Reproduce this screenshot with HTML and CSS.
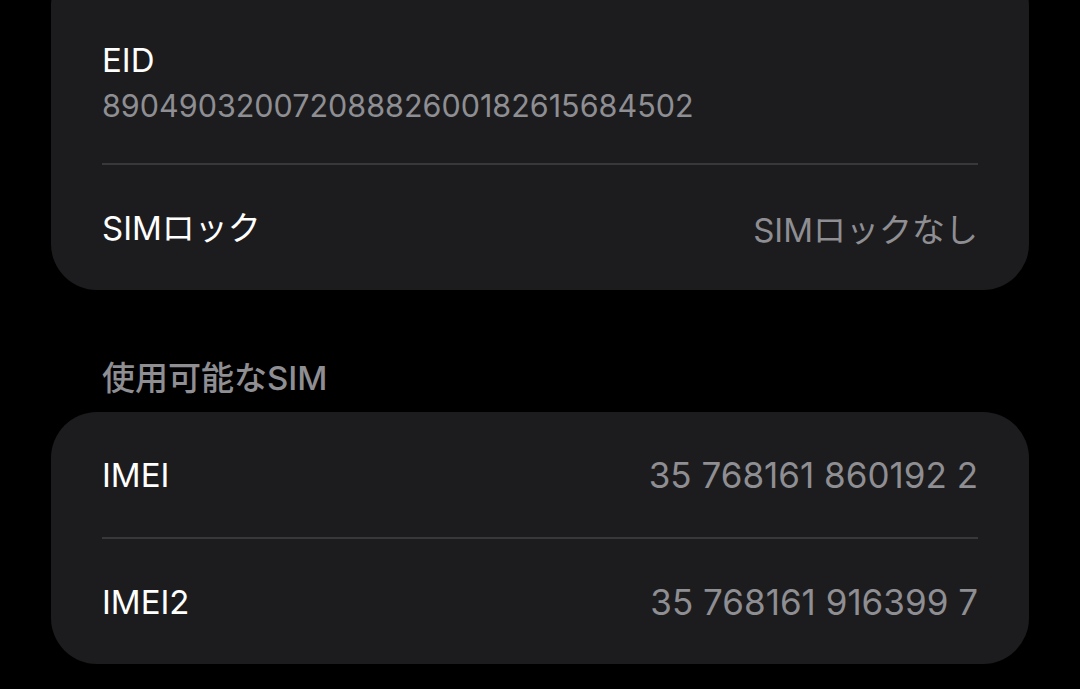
FILE: index.html
```html
<!DOCTYPE html>
<html lang="ja">

<head>
    <meta charset="UTF-8">
    <title>SIM</title>
    <link rel="stylesheet" href="styles.css">
</head>

<body>
    <div class="card card-first">
        <div class="row row-stack">
            <div class="label">EID</div>
            <div class="sub">89049032007208882600182615684502</div>
        </div>
        <div class="row">
            <div class="label">SIMロック</div>
            <div class="value">SIMロックなし</div>
        </div>
    </div>

    <h2 class="section">使用可能なSIM</h2>

    <div class="card">
        <div class="row">
            <div class="label">IMEI</div>
            <div class="value num">35 768161 860192 2</div>
        </div>
        <div class="row">
            <div class="label">IMEI2</div>
            <div class="value num">35 768161 916399 7</div>
        </div>
    </div>
</body>

</html>
```

FILE: styles.css
```css
* {
    padding: 0;
    margin: 0;
    box-sizing: border-box;
}

body {
    background: #000;
    font-family: Inter, "Noto Sans CJK JP", sans-serif;
    color: #fff;
    overflow: hidden;
}

.card {
    margin: 0 51px;
    background: #1c1c1e;
    border-radius: 46px;
}

.card-first {
    margin-top: -40px;
    padding-top: 77px;
}

.row {
    margin: 0 51px;
    height: 125px;
    display: flex;
    align-items: center;
    justify-content: space-between;
}

.row + .row {
    border-top: 2px solid #38383a;
    height: 127px;
}

.row-stack {
    height: 126px;
    flex-direction: column;
    align-items: flex-start;
    justify-content: flex-start;
}

.label {
    font-size: 33px;
    line-height: 46px;
}

.sub {
    font-size: 30.5px;
    line-height: 46px;
    color: #8e8e93;
}

.value {
    font-size: 33px;
    color: #8e8e93;
}

.value.num {
    font-size: 35px;
}

.section {
    font-size: 33px;
    font-weight: 500;
    color: #8e8e93;
    line-height: 40px;
    padding: 68px 0 14px 102px;
}
```
